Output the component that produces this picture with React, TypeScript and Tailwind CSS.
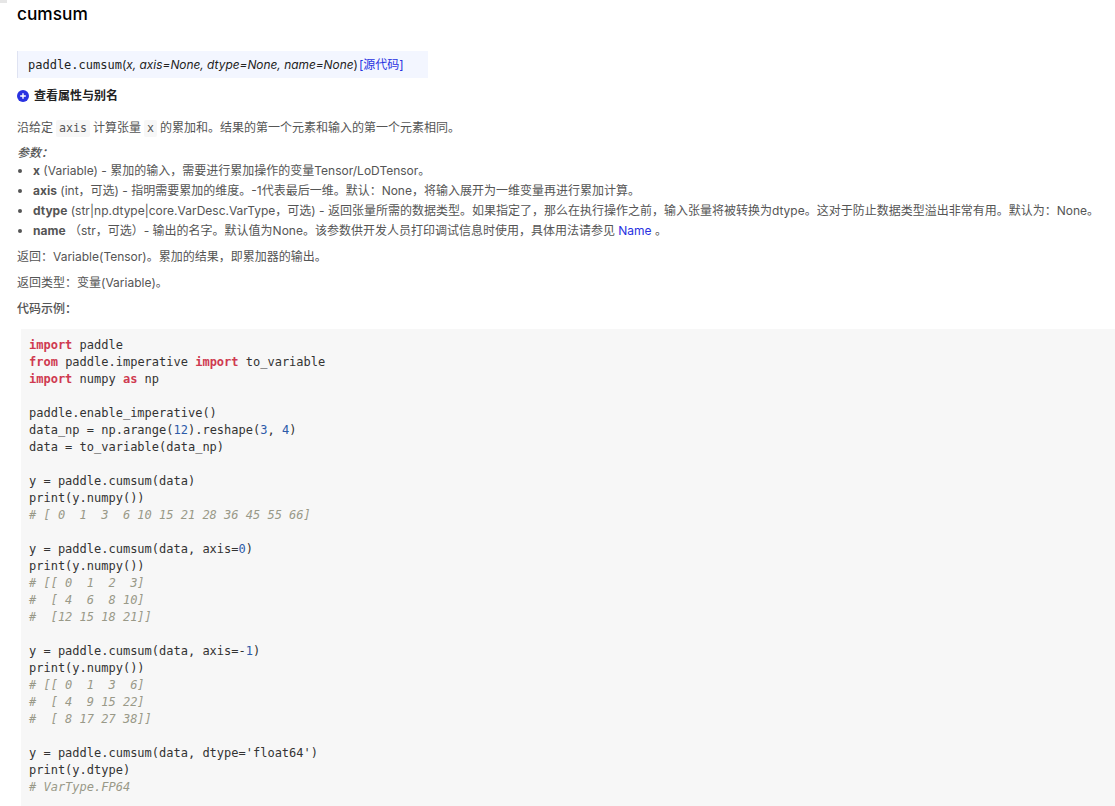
const sans = `Inter, "Noto Sans CJK SC", sans-serif`;

const K = ({ children }: { children: React.ReactNode }) => <span className="font-bold text-[#cf3a50]">{children}</span>;
const N = ({ children }: { children: React.ReactNode }) => <span className="text-[#2c5aa8]">{children}</span>;
const C = ({ children }: { children: React.ReactNode }) => <span className="italic text-[#999988]">{children}</span>;

export default function App() {
  return (
    <div className="relative h-[806px] w-[1115px] overflow-hidden bg-white text-[12px] leading-[20px] text-[#555]" style={{ fontFamily: sans }}>
      <div className="absolute left-0 top-0 h-[3px] w-[7px] bg-[#e6e6e6]" />
      <div className="pl-[17px]">
        <h1 className="h-[51px] pt-[3px] text-[17.3px] font-medium leading-[22px] text-black">cumsum</h1>
        <div className="flex h-[27px] w-[411px] items-center border-l border-[#dfe3f2] bg-[#f3f6ff] pl-[10px] text-[12px] text-[#222]">
          <span className="font-['DejaVu_Sans_Mono'] text-[12px]">paddle.cumsum</span>
          <span>(</span>
          <span className="text-[11.9px] italic">x, axis=None, dtype=None, name=None</span>
          <span className="mr-[1px]">)</span>
          <span className="text-[#2932e1]">[源代码]</span>
        </div>
        <div className="mt-[8px] flex h-[20px] items-center gap-[5px] font-bold text-[#222]">
          <svg width="12" height="12" viewBox="0 0 12 12">
            <circle cx="6" cy="6" r="6" fill="#2932e1" />
            <path d="M6 3.2v5.6M3.2 6h5.6" stroke="#fff" strokeWidth="1.4" />
          </svg>
          <span>查看属性与别名</span>
        </div>
        <p className="mt-[12px] flex h-[20px] items-center">
          沿给定
          <code className="mx-[3px] rounded-[2px] bg-[#f7f7f7] px-[3px] font-['DejaVu_Sans_Mono'] text-[11.6px] leading-[17px]">axis</code>
          计算张量
          <code className="mx-[3px] rounded-[2px] bg-[#f7f7f7] px-[3px] font-['DejaVu_Sans_Mono'] text-[11.6px] leading-[17px]">x</code>
          的累加和。结果的第一个元素和输入的第一个元素相同。
        </p>
        <p className="mt-[5px] font-medium italic">参数：</p>
        <ul className="-mt-[2px] list-disc pl-[16px] marker:text-[#555]">
          <li><b>x</b> (Variable) - 累加的输入，需要进行累加操作的变量Tensor/LoDTensor。</li>
          <li><b>axis</b> (int，可选) - 指明需要累加的维度。-1代表最后一维。默认：None，将输入展开为一维变量再进行累加计算。</li>
          <li><b>dtype</b> (str|np.dtype|core.VarDesc.VarType，可选) - 返回张量所需的数据类型。如果指定了，那么在执行操作之前，输入张量将被转换为dtype。这对于防止数据类型溢出非常有用。默认为：None。</li>
          <li><b>name</b> （str，可选）- 输出的名字。默认值为None。该参数供开发人员打印调试信息时使用，具体用法请参见 <span className="text-[#2932e1]">Name</span> 。</li>
        </ul>
        <p className="mt-[6px]">返回：Variable(Tensor)。累加的结果，即累加器的输出。</p>
        <p className="mt-[6px]">返回类型：变量(Variable)。</p>
        <p className="mt-[6px] font-medium">代码示例：</p>
        <pre className="mt-[10px] ml-[4px] h-[477px] overflow-hidden bg-[#f7f7f7] pl-[8px] pt-[8px] font-['DejaVu_Sans_Mono'] text-[12px] leading-[17px] text-[#333]">
<K>import</K> paddle{"\n"}
<K>from</K> paddle.imperative <K>import</K> to_variable{"\n"}
<K>import</K> numpy <K>as</K> np{"\n"}
{"\n"}
paddle.enable_imperative(){"\n"}
data_np = np.arange(<N>12</N>).reshape(<N>3</N>, <N>4</N>){"\n"}
data = to_variable(data_np){"\n"}
{"\n"}
y = paddle.cumsum(data){"\n"}
print(y.numpy()){"\n"}
<C># [ 0  1  3  6 10 15 21 28 36 45 55 66]</C>{"\n"}
{"\n"}
y = paddle.cumsum(data, axis=<N>0</N>){"\n"}
print(y.numpy()){"\n"}
<C># [[ 0  1  2  3]</C>{"\n"}
<C>#  [ 4  6  8 10]</C>{"\n"}
<C>#  [12 15 18 21]]</C>{"\n"}
{"\n"}
y = paddle.cumsum(data, axis=-<N>1</N>){"\n"}
print(y.numpy()){"\n"}
<C># [[ 0  1  3  6]</C>{"\n"}
<C>#  [ 4  9 15 22]</C>{"\n"}
<C>#  [ 8 17 27 38]]</C>{"\n"}
{"\n"}
y = paddle.cumsum(data, dtype=<span>'float64'</span>){"\n"}
print(y.dtype){"\n"}
<C># VarType.FP64</C>
        </pre>
      </div>
    </div>
  );
}
